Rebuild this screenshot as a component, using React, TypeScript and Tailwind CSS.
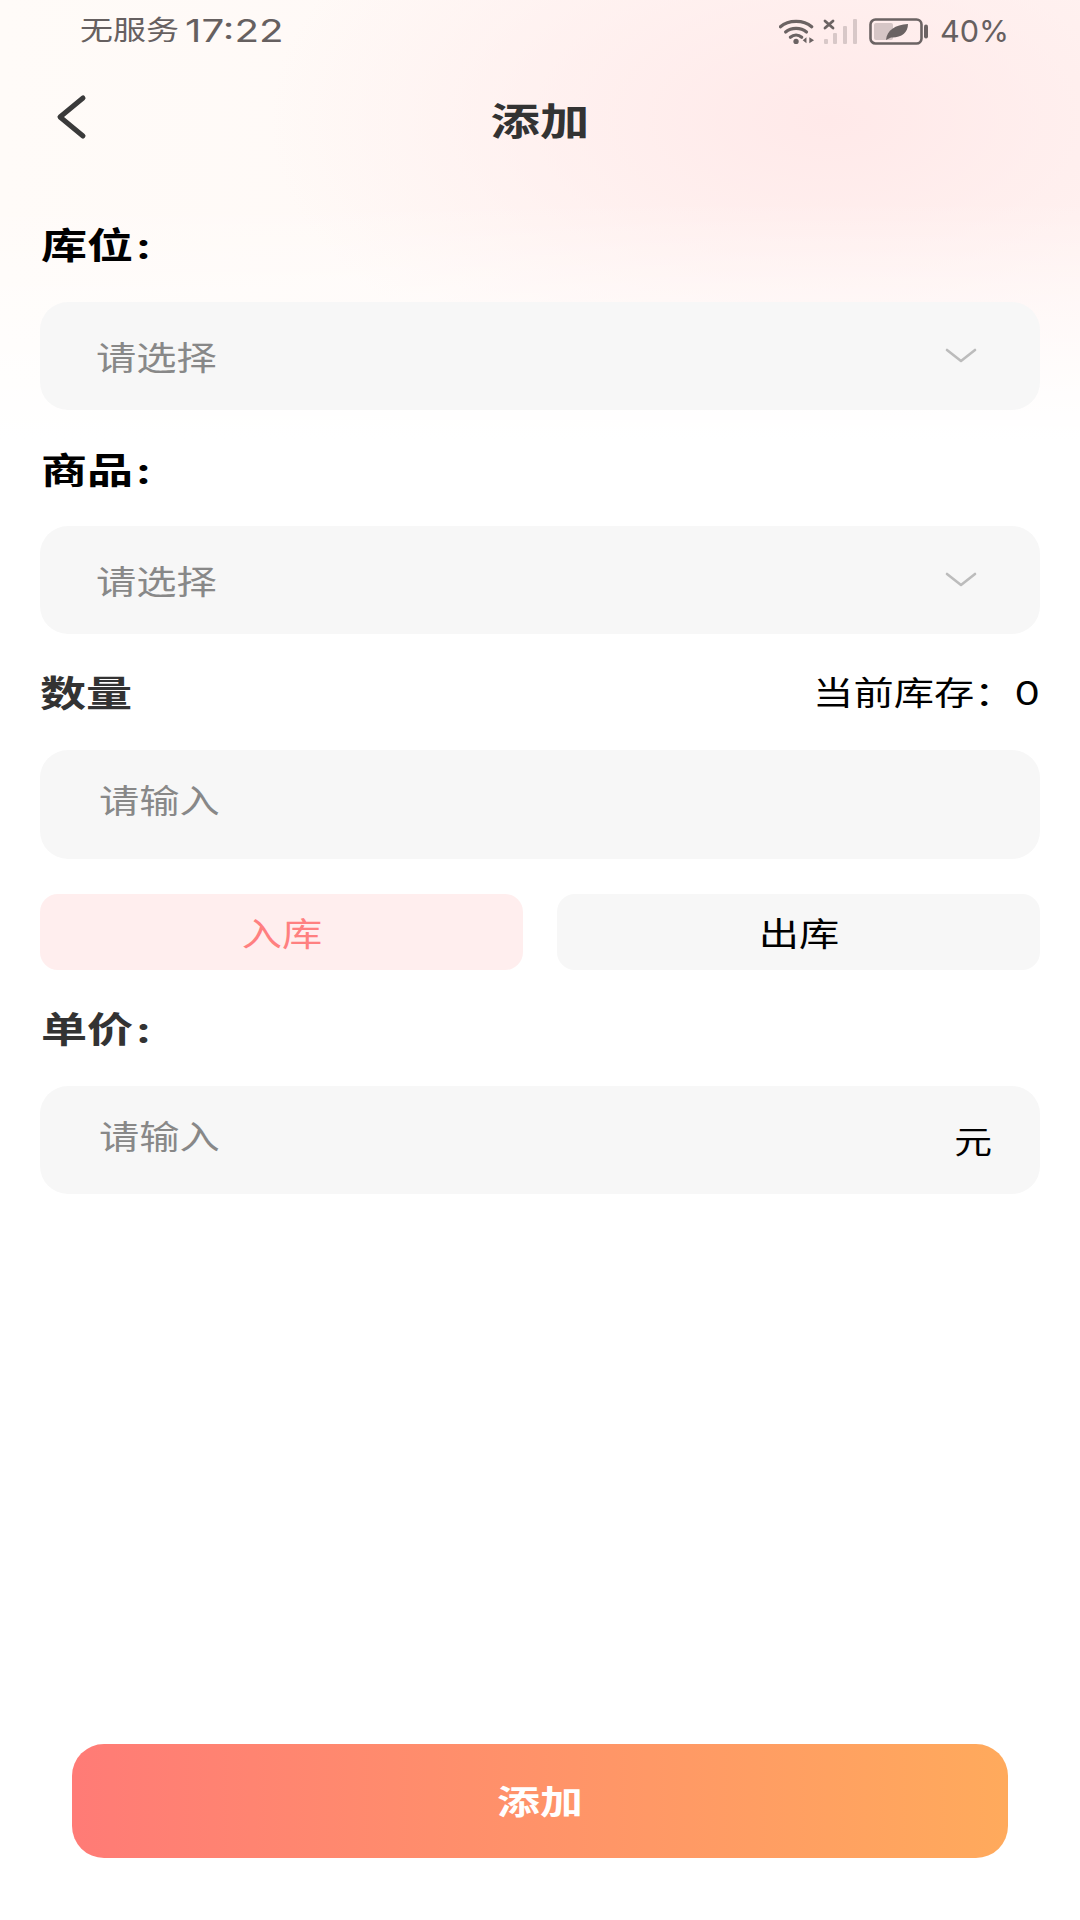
const CJK = "font-['Inter','Noto_Sans_CJK_SC',sans-serif]";

function WifiIcon() {
  return (
    <svg width="36" height="27" viewBox="0 0 38 27" fill="none" stroke="#6b6363" strokeWidth="3.4" strokeLinecap="round">
      <path d="M1.5 8.5C10 1 26 1 34.5 8.5" />
      <path d="M7 14C13 9 23 9 29 14" />
      <path d="M12 19.5C15.5 16.5 20.5 16.5 24 19.5" />
      <circle cx="18" cy="24" r="2.8" fill="#6b6363" stroke="none" />
      <path d="M29 19.5V26L25 22.8Z M32 19.5V26L37 22.8Z" fill="#6b6363" stroke="none" />
    </svg>
  );
}

function SignalIcon() {
  return (
    <svg width="36" height="27" viewBox="0 0 36 27" fill="none">
      <path d="M2 3L10 10M10 3L2 10" stroke="#6b6363" strokeWidth="2.8" strokeLinecap="round" />
      <rect x="1" y="21" width="4" height="5" rx="1" fill="#d8c8c8" />
      <rect x="10" y="15" width="4" height="11" rx="1" fill="#d8c8c8" />
      <rect x="20" y="8" width="4" height="18" rx="1" fill="#d8c8c8" />
      <rect x="30" y="1" width="4" height="25" rx="1" fill="#d8c8c8" />
    </svg>
  );
}

function BatteryIcon() {
  return (
    <svg width="60" height="27" viewBox="0 0 60 27" fill="none">
      <rect x="1.5" y="1.5" width="51" height="24" rx="5" stroke="#6b6363" strokeWidth="2.6" />
      <rect x="5" y="5" width="19" height="17" rx="2" fill="#d6c6c6" />
      <path d="M57 8.5V18.5" stroke="#6b6363" strokeWidth="4" strokeLinecap="round" />
      <path d="M17 22C18 12 26 7 39 6C39 15 32 20 22 19.5L17 22Z" fill="#6b6363" />
    </svg>
  );
}

function Chevron() {
  return (
    <svg width="32" height="16" viewBox="0 0 32 16" fill="none" stroke="#bcbcbc" strokeWidth="2.6" strokeLinecap="round" strokeLinejoin="round">
      <path d="M2 2L16 13L30 2" />
    </svg>
  );
}

function Label({ text, color }: { text: string; color: string }) {
  return (
    <div className={`h-[50px] pl-[1px] flex items-center text-[36px] leading-[50px] font-bold ${color}`}>
      <span className="inline-block origin-left scale-x-[1.28] whitespace-nowrap">
        {text}
        <span className="ml-[2px]">:</span>
      </span>
    </div>
  );
}

function SelectField() {
  return (
    <div className="h-[108px] rounded-[28px] bg-[#f7f7f7] pl-[56px] pr-[63px] flex items-center justify-between">
      <span className="pt-[5px] inline-block origin-left scale-x-[1.22] text-[33px] text-[#888888] whitespace-nowrap">请选择</span>
      <Chevron />
    </div>
  );
}

export default function App() {
  return (
    <div
      className={`${CJK} w-[1080px] h-[1920px] overflow-hidden flex flex-col bg-white bg-[linear-gradient(to_bottom,rgba(255,255,255,0)_200px,#ffffff_440px),radial-gradient(ellipse_560px_300px_at_830px_120px,#ffe9e9,rgba(255,233,233,0)),linear-gradient(to_right,#fffbf8,#fff6f4)]`}
    >
      <div className="h-[62px] shrink-0 pl-[80px] pr-[73px] flex items-center justify-between text-[#666060]">
        <div className="flex items-center gap-[5px] whitespace-nowrap">
          <span className="text-[27px] inline-block w-[100px] origin-left scale-x-[1.22]">无服务</span>
          <span className="text-[31px] inline-block w-[96px] origin-left scale-x-[1.3]">17:22</span>
        </div>
        <div className="flex items-center">
          <WifiIcon />
          <span className="w-[8px]" />
          <SignalIcon />
          <span className="w-[10px]" />
          <BatteryIcon />
          <span className="w-[11px]" />
          <span className="text-[30px] inline-block w-[67px] origin-left scale-x-[1.02]">40%</span>
        </div>
      </div>

      <div className="relative h-[118px] shrink-0 flex items-center justify-center">
        <svg className="absolute left-[52px] top-[30px]" width="36" height="50" viewBox="0 0 36 50" fill="none" stroke="#3a3a3a" strokeWidth="5" strokeLinecap="round" strokeLinejoin="round">
          <path d="M31 6L8 25L31 44" />
        </svg>
        <span className="inline-block origin-center scale-x-[1.3] text-[38px] font-bold text-[#333333] whitespace-nowrap">添加</span>
      </div>

      <div className="flex flex-col px-[40px] pt-[41px]">
        <Label text="库位" color="text-black" />
        <div className="mt-[31px]">
          <SelectField />
        </div>
        <div className="mt-[36px]">
          <Label text="商品" color="text-black" />
        </div>
        <div className="mt-[30px]">
          <SelectField />
        </div>
        <div className="mt-[35px] h-[50px] flex items-center justify-between">
          <span className="inline-block origin-left scale-x-[1.28] text-[36px] font-bold text-[#333333] whitespace-nowrap">数量</span>
          <span className="inline-block origin-right scale-x-[1.22] text-[33px] text-black whitespace-nowrap">{"当前库存\uFF1A0"}</span>
        </div>
        <div className="mt-[31px] h-[109px] rounded-[28px] bg-[#f7f7f7] pl-[59px] flex items-start pt-[27px]">
          <span className="inline-block origin-left scale-x-[1.22] text-[33px] text-[#888888] whitespace-nowrap">请输入</span>
        </div>
        <div className="mt-[35px] flex gap-[34px]">
          <div className="flex-1 h-[76px] rounded-[18px] bg-[#ffeeee] flex items-center justify-center pt-[5px]">
            <span className="inline-block origin-center scale-x-[1.22] text-[33px] text-[#ff8080] whitespace-nowrap">入库</span>
          </div>
          <div className="flex-1 h-[76px] rounded-[18px] bg-[#f7f7f7] flex items-center justify-center pt-[5px]">
            <span className="inline-block origin-center scale-x-[1.22] text-[33px] text-black whitespace-nowrap">出库</span>
          </div>
        </div>
        <div className="mt-[35px]">
          <Label text="单价" color="text-[#333333]" />
        </div>
        <div className="mt-[31px] h-[108px] rounded-[28px] bg-[#f7f7f7] pl-[59px] pr-[48px] flex justify-between">
          <span className="mt-[27px] h-fit inline-block origin-left scale-x-[1.22] text-[33px] text-[#888888] whitespace-nowrap">请输入</span>
          <span className="mt-[33px] h-fit inline-block origin-right scale-x-[1.22] text-[31px] text-black whitespace-nowrap">元</span>
        </div>
      </div>

      <div className="mt-auto mb-[62px] mx-[72px] h-[114px] rounded-[32px] bg-[linear-gradient(to_right,#ff7b76,#ffaa5c)] flex items-center justify-center pt-[4px]">
        <span className="inline-block origin-center scale-x-[1.3] text-[33px] font-bold text-white whitespace-nowrap">添加</span>
      </div>
    </div>
  );
}
